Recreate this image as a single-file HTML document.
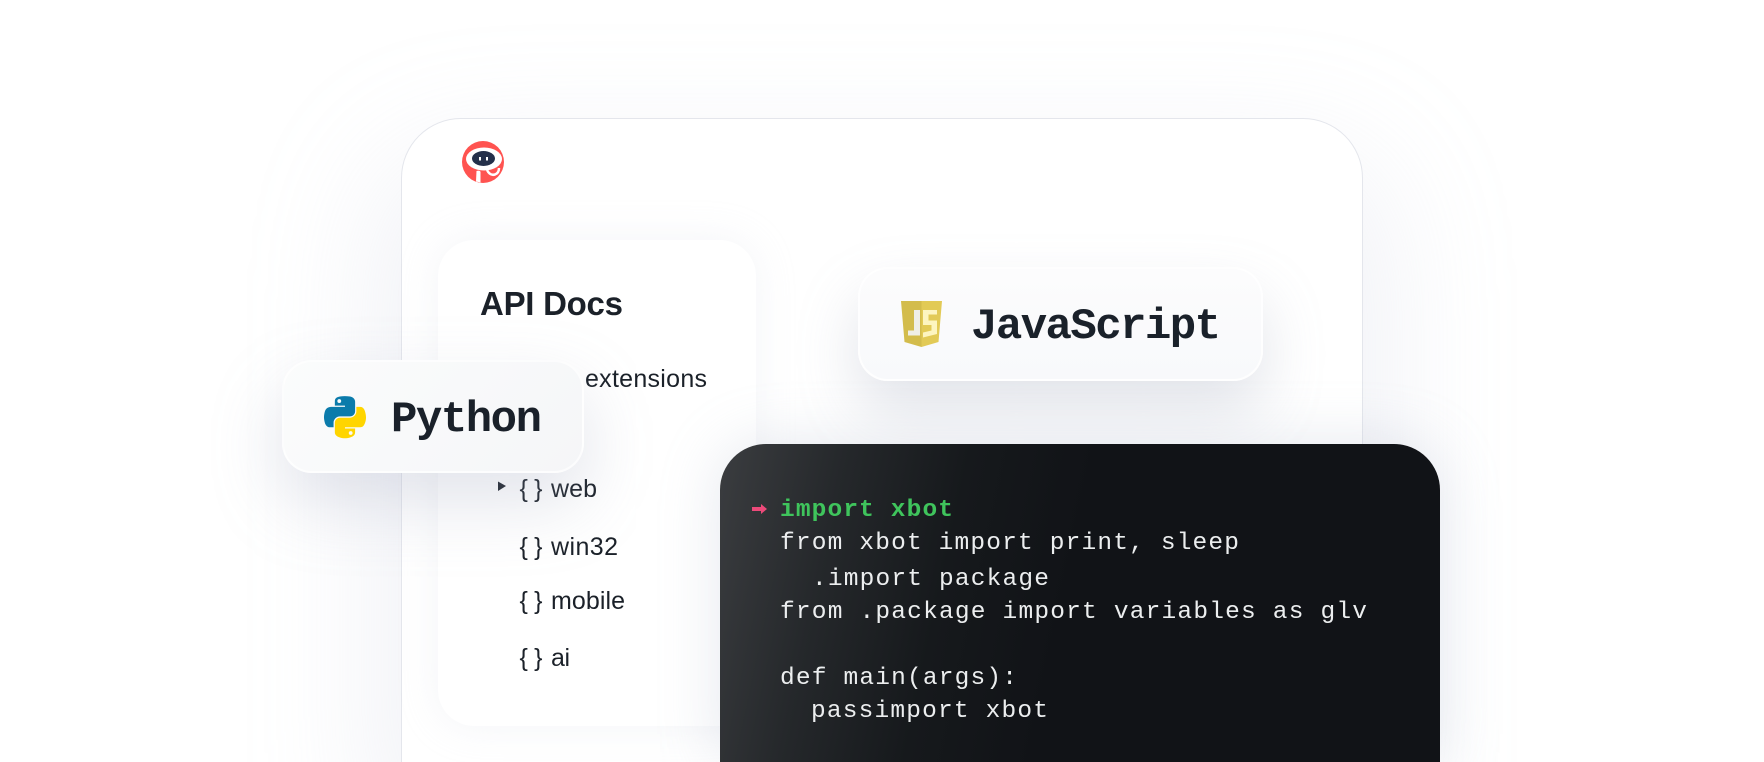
<!DOCTYPE html>
<html lang="en">
<head>
<meta charset="utf-8">
<title>API Docs</title>
<style>
html,body{margin:0;padding:0;width:1764px;height:762px;overflow:hidden;background:#fff}
#s{position:relative;width:1764px;height:762px;overflow:hidden;background:#fff}
#s>div,#s>svg{position:absolute;box-sizing:border-box}
.big{left:401px;top:118px;width:962px;height:644px;border-radius:60px 60px 0 0;background:#fff;border:1.500px solid #e4e6ec;border-bottom:0;box-shadow:0 60px 150px 20px rgba(196,202,220,.26)}
.side{left:438px;top:240px;width:318px;height:486px;border-radius:36px;background:#fff;box-shadow:0 0 40px rgba(205,210,225,.22)}
.py{left:282px;top:360px;width:302px;height:113px;border-radius:30px;background:linear-gradient(135deg,#fbfcfc,#f5f6f8);border:2px solid rgba(255,255,255,.7);box-shadow:0 30px 70px rgba(150,158,182,.28)}
.js{left:858px;top:267px;width:405px;height:114px;border-radius:30px;background:linear-gradient(180deg,#fcfcfd,#f8f9fb);border:2px solid rgba(255,255,255,.8);box-shadow:0 30px 60px rgba(150,158,180,.28)}
.code{left:720px;top:444px;width:720px;height:318px;border-radius:46px 46px 0 0;background:linear-gradient(102deg,#3b3d40 0,#25282b 16%,#16191c 32%,#111317 48%,#111317 100%);box-shadow:0 0 60px rgba(170,178,198,.30)}
text{white-space:pre}
.sans{font-family:"Liberation Sans",sans-serif;fill:#1b2129}
.mono{font-family:"Liberation Mono",monospace}
.c{font-size:24.500px;fill:#eceeef}
.t{font-size:44px;font-weight:700;fill:#1a212a}
</style>
</head>
<body>
<div id="s">
<div class="big"></div>
<div class="side"></div>
<svg style="left:0;top:0" width="1764" height="762" viewBox="0 0 1764 762">
<text class="sans" x="480" y="315" font-size="33" font-weight="700" textLength="143">API Docs</text>
<text class="sans" x="585" y="387" font-size="25" textLength="122">extensions</text>
<path d="M498 481.500L506 486L498 491Z" fill="#1b2129"/>
<text class="sans" x="519.500" y="497" font-size="25" textLength="23">{ }</text>
<text class="sans" x="551" y="497" font-size="25" textLength="46">web</text>
<text class="sans" x="519.500" y="555" font-size="25" textLength="23">{ }</text>
<text class="sans" x="551" y="555" font-size="25" textLength="67">win32</text>
<text class="sans" x="519.500" y="609" font-size="25" textLength="23">{ }</text>
<text class="sans" x="551" y="609" font-size="25" textLength="74">mobile</text>
<text class="sans" x="519.500" y="666" font-size="25" textLength="23">{ }</text>
<text class="sans" x="551" y="666" font-size="25" textLength="19">ai</text>
<circle cx="483" cy="162" r="21" fill="#ff5350"/>
<ellipse cx="484" cy="159" rx="18" ry="11.500" fill="#fff"/>
<ellipse cx="483.500" cy="158.500" rx="11.500" ry="7.500" fill="#24304a"/>
<rect x="479" y="157" width="2" height="3.500" fill="#fff"/>
<rect x="486" y="157" width="2" height="3.500" fill="#fff"/>
<path d="M476.500 171Q480 170 480.500 172V182.500L476 181.500Z" fill="#fff"/>
<path d="M487 170Q490 176 495 174.500Q499 173 499 168" fill="none" stroke="#fff" stroke-width="2.500"/>
</svg>
<div class="py"></div>
<div class="js"></div>
<svg style="left:0;top:0" width="1764" height="762" viewBox="0 0 1764 762">
<text class="mono t" x="391" y="431" textLength="151">Python</text>
<text class="mono t" x="971" y="338" textLength="250">JavaScript</text>
<g transform="translate(324 396) scale(.378)">
<path fill="#0b7bab" d="M54.900.2C50.300.2 46 .6 42.100 1.300 30.800 3.300 28.700 7.500 28.700 15.200V25.400H55.500V28.800H18.600C10.800 28.800 4 33.500 1.900 42.400-.6 52.500-.7 58.800 1.900 69.300 3.800 77.200 8.300 82.800 16.100 82.800H25.300V70.600C25.300 61.800 33 54 42.100 54H68.900C76.400 54 82.300 47.900 82.300 40.500V15.200C82.300 8 76.200 2.600 68.900 1.300 64.300.5 59.500.2 54.900.2ZM40.400 8.400a5 5 0 1 1 0 10.100a5 5 0 1 1 0-10.100Z"/>
<path fill="#ffd500" d="M85.600 28.800V40.500C85.600 49.700 77.900 57.400 68.900 57.400H42.100C34.800 57.400 28.700 63.700 28.700 71V96.200C28.700 103.400 35 107.600 42.100 109.700 50.600 112.200 58.700 112.600 68.900 109.700 75.600 107.800 82.300 103.900 82.300 96.200V86H55.500V82.600H95.700C103.500 82.600 106.400 77.200 109.100 69.300 111.900 61.200 111.800 53.400 109.100 42.900 107.200 35.400 103.600 28.800 95.700 28.800ZM70.600 92.900a5 5 0 1 1 0 10.100a5 5 0 1 1 0-10.100Z"/>
</g>
<g transform="translate(901 301)">
<path d="M0 0H20.500V46L3.500 41Z" fill="#d3bc4c"/>
<path d="M20.500 0H41L37.500 41L20.500 46Z" fill="#e2ca56"/>
<path d="M13 9H19V34.500H7V29.500H13Z" fill="#efeee6"/>
<path d="M22 9H36V13.500H27.500V19.500H36V33L22 36.500V31.500L30.500 29.500V24H22Z" fill="#fdf5c0"/>
</g>
</svg>
<div class="code"></div>
<svg style="left:0;top:0" width="1764" height="762" viewBox="0 0 1764 762">
<path d="M752 507H761V504L767 509L761 514V511H752Z" fill="#ec4a7a"/>
<text class="mono" x="780" y="516" font-size="24.500" font-weight="700" fill="#3fc45c" textLength="173">import xbot</text>
<text class="mono c" x="780" y="549" textLength="459">from xbot import print, sleep</text>
<text class="mono c" x="812" y="585" textLength="237">.import package</text>
<text class="mono c" x="780" y="618" textLength="587">from .package import variables as glv</text>
<text class="mono c" x="780" y="684" textLength="237">def main(args):</text>
<text class="mono c" x="811" y="717" textLength="237">passimport xbot</text>
</svg>
</div>
</body>
</html>
